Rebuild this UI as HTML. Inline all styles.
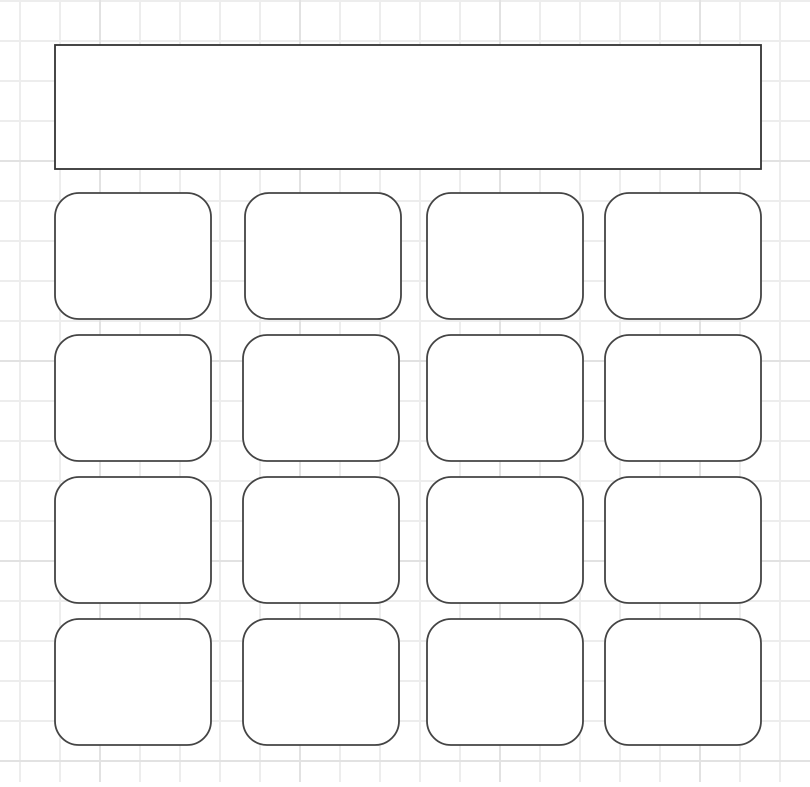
<!DOCTYPE html><html><head><style>
body{margin:0;width:810px;height:782px;overflow:hidden;background:#fff}
</style></head><body>
<svg width="810" height="782" xmlns="http://www.w3.org/2000/svg">
<defs>
<pattern id="g" x="19" y="0" width="40" height="40" patternUnits="userSpaceOnUse">
<path d="M1 0V40M0 1H40" stroke="#ededed" stroke-width="2" fill="none"/>
</pattern>
<pattern id="G" x="99" y="160" width="200" height="200" patternUnits="userSpaceOnUse">
<path d="M1 0V200M0 1H200" stroke="#e2e2e2" stroke-width="2" fill="none"/>
</pattern>
</defs>
<rect width="810" height="782" fill="url(#g)"/>
<rect width="810" height="782" fill="url(#G)"/>
<g fill="#fff" stroke="#444" stroke-width="1.8">
<rect x="55" y="45" width="706" height="124" stroke="#333"/>
<rect x="55" y="193" width="156" height="126" rx="24"/>
<rect x="245" y="193" width="156" height="126" rx="24"/>
<rect x="427" y="193" width="156" height="126" rx="24"/>
<rect x="605" y="193" width="156" height="126" rx="24"/>
<rect x="55" y="335" width="156" height="126" rx="24"/>
<rect x="243" y="335" width="156" height="126" rx="24"/>
<rect x="427" y="335" width="156" height="126" rx="24"/>
<rect x="605" y="335" width="156" height="126" rx="24"/>
<rect x="55" y="477" width="156" height="126" rx="24"/>
<rect x="243" y="477" width="156" height="126" rx="24"/>
<rect x="427" y="477" width="156" height="126" rx="24"/>
<rect x="605" y="477" width="156" height="126" rx="24"/>
<rect x="55" y="619" width="156" height="126" rx="24"/>
<rect x="243" y="619" width="156" height="126" rx="24"/>
<rect x="427" y="619" width="156" height="126" rx="24"/>
<rect x="605" y="619" width="156" height="126" rx="24"/>
</g>
</svg>
</body></html>
